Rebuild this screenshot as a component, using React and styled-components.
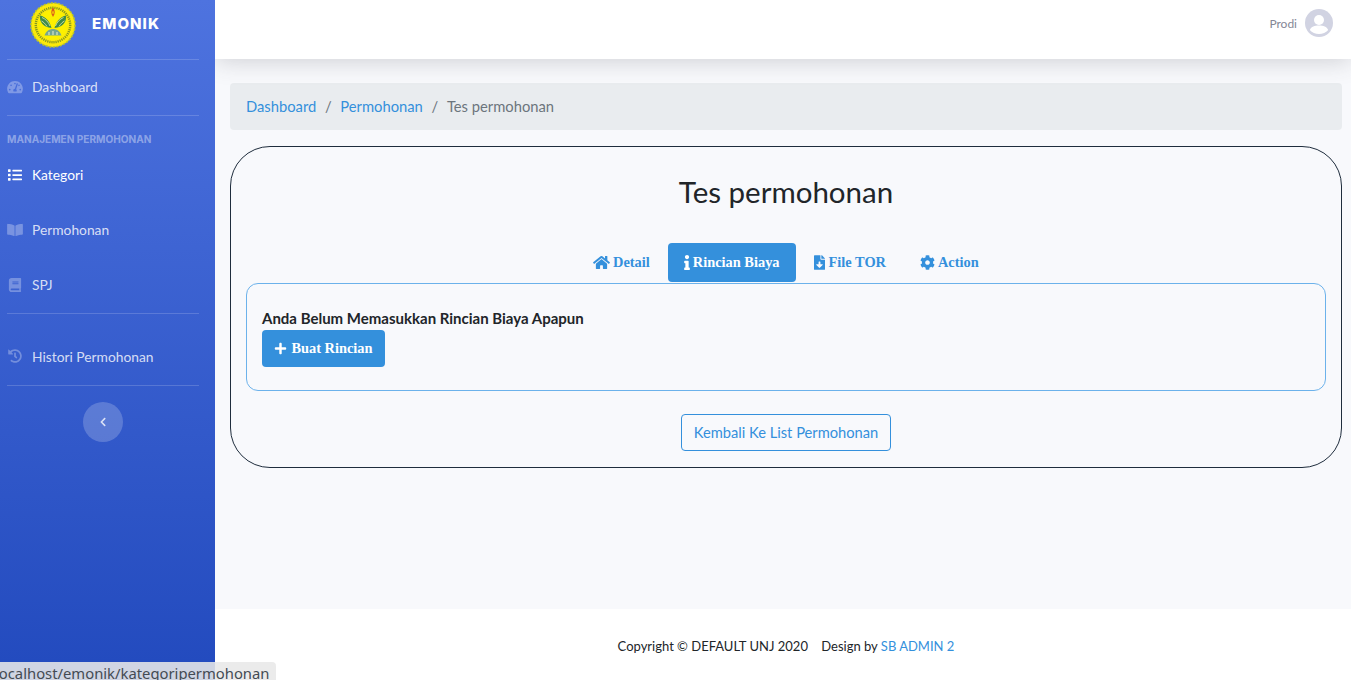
import React from 'react';
import styled, { createGlobalStyle } from 'styled-components';
import { FaTachometerAlt, FaList, FaBookOpen, FaBook, FaHistory, FaChevronLeft, FaHome, FaInfo, FaFileDownload, FaCog, FaPlus } from 'react-icons/fa';

const Global = createGlobalStyle`
  html, body { margin: 0; padding: 0; height: 100%; overflow: hidden; }
  body { font-family: Lato, "Open Sans", sans-serif; background: #f8f9fc; }
  * { box-sizing: border-box; }
`;
const Page = styled.div`display: flex; width: 1351px; height: 680px; position: relative; overflow: hidden;`;
const Sidebar = styled.aside`
  width: 215px; flex: none; height: 680px; padding-left: 7px; position: relative; z-index: 2;
  background: linear-gradient(180deg, #4e73df 0%, #224abe 100%);
  display: flex; flex-direction: column;
`;
const Brand = styled.div`height: 59px; display: flex; align-items: center; gap: 16px; padding: 0 0 9px 23px;`;
const BrandName = styled.span`color: #fff; font: 800 15px/1 Inter, sans-serif; letter-spacing: 1.05px; margin-top: -3px;`;
const Divider = styled.hr`flex: none; margin: 0; border: 0; height: 1px; width: 192px; background: rgba(255,255,255,.17);`;
const Heading = styled.div`
  height: 20px; margin-top: 13px; margin-bottom: -1px; display: flex; align-items: center;
  font: 700 10.1px/1 Inter, sans-serif; color: rgba(255,255,255,.4); text-transform: uppercase;
`;
const Item = styled.a`
  height: ${p => p.$h}px; padding: ${p => p.$pt || 0}px 0 2px; flex: none; display: flex; align-items: center; gap: 9px;
  color: ${p => p.$active ? '#fff' : 'rgba(255,255,255,.8)'};
  font-size: 13.8px; text-decoration: none;
  svg { width: 16px; height: 14px; flex: none; color: ${p => p.$active ? '#fff' : 'rgba(255,255,255,.3)'}; }
`;
const Toggle = styled.button`
  width: 40px; height: 40px; border: 0; border-radius: 50%; margin: 16px 0 0 76px; padding: 0 1px 0 0; flex: none;
  background: rgba(255,255,255,.2); color: rgba(255,255,255,.78);
  display: flex; align-items: center; justify-content: center;
  svg { width: 10px; height: 10px; }
`;
const Main = styled.div`flex: 1; min-width: 0; display: flex; flex-direction: column; height: 680px;`;
const Topbar = styled.header`
  height: 59px; flex: none; background: #fff; box-shadow: 0 2px 24px rgba(58,59,69,.22);
  display: flex; align-items: center; justify-content: flex-end; gap: 8px; padding: 0 18px 13px 0; position: relative;
`;
const UserName = styled.span`font-size: 12px; color: #858796;`;
const Content = styled.main`flex: 1; padding: 24px 9px 0 15px; background: #f8f9fc;`;
const Breadcrumb = styled.nav`
  height: 47px; border-radius: 4px; background: #e9ecef; display: flex; align-items: center; padding: 0 16px 2px;
  font-size: 14.75px; color: #6c757d;
`;
const Crumb = styled.a`color: #3490dc; text-decoration: none;`;
const Sep = styled.span`padding: 0 8.7px; color: #6c757d;`;
const Card = styled.section`
  margin-top: 16px; height: 322px; border: 1px solid #1f2d3d; border-radius: 40px; padding: 0 15px;
  display: flex; flex-direction: column; align-items: stretch;
`;
const Title = styled.h1`
  margin: 25px 0 0; text-align: center; font-weight: 400; font-size: 29.5px; line-height: 40px; color: #212529;
`;
const Tabs = styled.div`
  margin: 31px auto 0; display: flex; height: 41px; width: 418px; gap: 2px; border-bottom: 1px solid #dee2e6;
`;
const Tab = styled.a`
  height: 39px; display: flex; align-items: center; gap: ${p => p.$gap}px; padding: 0 16px; border-radius: 4px; white-space: nowrap;
  font: 700 14.4px/1 "Liberation Serif", serif; text-decoration: none;
  background: ${p => p.$active ? '#3490dc' : 'transparent'};
  color: ${p => p.$active ? '#fff' : '#3490dc'};
  svg { height: 15px; width: ${p => p.$icon}px; flex: none; }
`;
const Panel = styled.div`
  height: 108px; margin-top: -1px; border: 1px solid #6cb2eb; border-radius: 12px; padding: 24px 15px 0;
`;
const Message = styled.div`font-weight: 700; font-size: 15px; line-height: 20px; color: #212529;`;
const Primary = styled.a`
  width: 123px; height: 37px; margin-top: 2px; border-radius: 4px; background: #3490dc; color: #fff;
  display: flex; align-items: center; justify-content: center; gap: 4px;
  font: 700 14.4px/1 "Liberation Serif", serif;
  svg { width: 13px; height: 13px; }
`;
const BackRow = styled.div`display: flex; justify-content: center; margin-top: 23px;`;
const Outline = styled.a`
  width: 210px; height: 37px; border: 1px solid #3490dc; border-radius: 4px; color: #3490dc; font-size: 14.7px; padding-bottom: 2px;
  display: flex; align-items: center; justify-content: center; text-decoration: none;
`;
const Footer = styled.footer`
  height: 71px; flex: none; background: #fff; display: flex; align-items: center; justify-content: center; padding: 3px 0 0 6px;
  font-size: 13px; color: #212529; white-space: pre;
`;
const FooterLink = styled.a`color: #3490dc;`;
const Status = styled.div`
  position: absolute; z-index: 3; left: 0; bottom: 0; height: 18px; width: 276px; border-top-right-radius: 4px;
  background: rgba(232,232,232,.88); color: #444b53; font: 14.8px/22px "Noto Sans", sans-serif; white-space: nowrap; overflow: hidden;
  text-indent: -5px; 
`;

const leafL = "M21.5 26C20 19.5 15.5 14.5 10 13.5c-.8 6.5 3.5 12 11.5 12.5z";
const Logo = () => (
  <svg width="46" height="46" viewBox="0 0 46 46">
    <circle cx="23" cy="23" r="22" fill="#fbe90b" stroke="#b9c42a" strokeWidth="1.6" strokeDasharray="2.2 1.4" />
    <circle cx="23" cy="23" r="20.2" fill="#fbe90b" />
    <circle cx="23" cy="23" r="17.2" fill="none" stroke="#5b7a28" strokeWidth="2.4" strokeDasharray="1.2 .9" opacity=".75" />
    <circle cx="23" cy="23" r="14.8" fill="#fdf000" />
    <path d="M23 5.500c2.300 3.200 2.300 6 0 9.500-2.300-3.500-2.300-6.300 0-9.500z" fill="#d9541c" />
    <path d="M23 8.500c.9 1.400.9 2.600 0 4-.9-1.400-.9-2.600 0-4z" fill="#fdf000" />
    <path d={leafL} fill="#3f8a4a" />
    <path d={leafL} fill="#3f8a4a" transform="matrix(-1 0 0 1 46 0)" />
    <path d="M20 24c-1.500-4-4.500-7-8-8.500M17 24.500c-1.500-2.500-3.500-4.500-5.500-5.500M25.500 24c1.500-4 4.500-7 8-8.500M29 24.500c1.500-2.500 3.500-4.500 5.500-5.500" stroke="#e4ecb0" strokeWidth=".8" fill="none" />
    <path d="M14.500 33.500c1.500-4.500 5-6.500 8.500-6.500s7 2 8.500 6.500z" fill="#76a592" />
    <path d="M19 33v-3M23 33v-4M27 33v-3" stroke="#e8f0d0" strokeWidth="1" />
  </svg>
);
const Avatar = () => (
  <svg width="28" height="28" viewBox="0 0 28 28">
    <circle cx="14" cy="14" r="14" fill="#d1d3e2" />
    <circle cx="14" cy="11" r="5" fill="#fff" />
    <path d="M4.800 21c1.600-3.400 4.600-4.500 9.200-4.500s7.600 1.100 9.200 4.500c-2.300 2.500-5.600 4-9.200 4s-6.900-1.500-9.200-4z" fill="#fff" />
  </svg>
);

export default function App() {
  return (
    <Page>
      <Global />
      <Sidebar>
        <Brand><Logo /><BrandName>EMONIK</BrandName></Brand>
        <Divider />
        <Item $h={55}><FaTachometerAlt />Dashboard</Item>
        <Divider />
        <Heading>Manajemen Permohonan</Heading>
        <Item $h={55} href="#" $active><FaList />Kategori</Item>
        <Item $h={55}><FaBookOpen />Permohonan</Item>
        <Item $h={55}><FaBook />SPJ</Item>
        <Divider />
        <Item $h={71} $pt={15}><FaHistory />Histori Permohonan</Item>
        <Divider />
        <Toggle aria-label="Toggle sidebar"><FaChevronLeft /></Toggle>
      </Sidebar>
      <Main>
        <Topbar><UserName>Prodi</UserName><Avatar /></Topbar>
        <Content>
          <Breadcrumb>
            <Crumb href="#">Dashboard</Crumb><Sep>/</Sep>
            <Crumb href="#">Permohonan</Crumb><Sep>/</Sep>
            <span>Tes permohonan</span>
          </Breadcrumb>
          <Card>
            <Title>Tes permohonan</Title>
            <Tabs>
              <Tab $icon={17} $gap={3}><FaHome />Detail</Tab>
              <Tab $active $icon={6} $gap={3}><FaInfo />Rincian Biaya</Tab>
              <Tab $icon={11} $gap={4}><FaFileDownload />File TOR</Tab>
              <Tab $icon={15} $gap={3}><FaCog />Action</Tab>
            </Tabs>
            <Panel>
              <Message>Anda Belum Memasukkan Rincian Biaya Apapun</Message>
              <Primary><FaPlus />Buat Rincian</Primary>
            </Panel>
            <BackRow><Outline href="#">Kembali Ke List Permohonan</Outline></BackRow>
          </Card>
        </Content>
        <Footer>Copyright © DEFAULT UNJ 2020    Design by <FooterLink>SB ADMIN 2</FooterLink></Footer>
      </Main>
      <Status>localhost/emonik/kategoripermohonan</Status>
    </Page>
  );
}
